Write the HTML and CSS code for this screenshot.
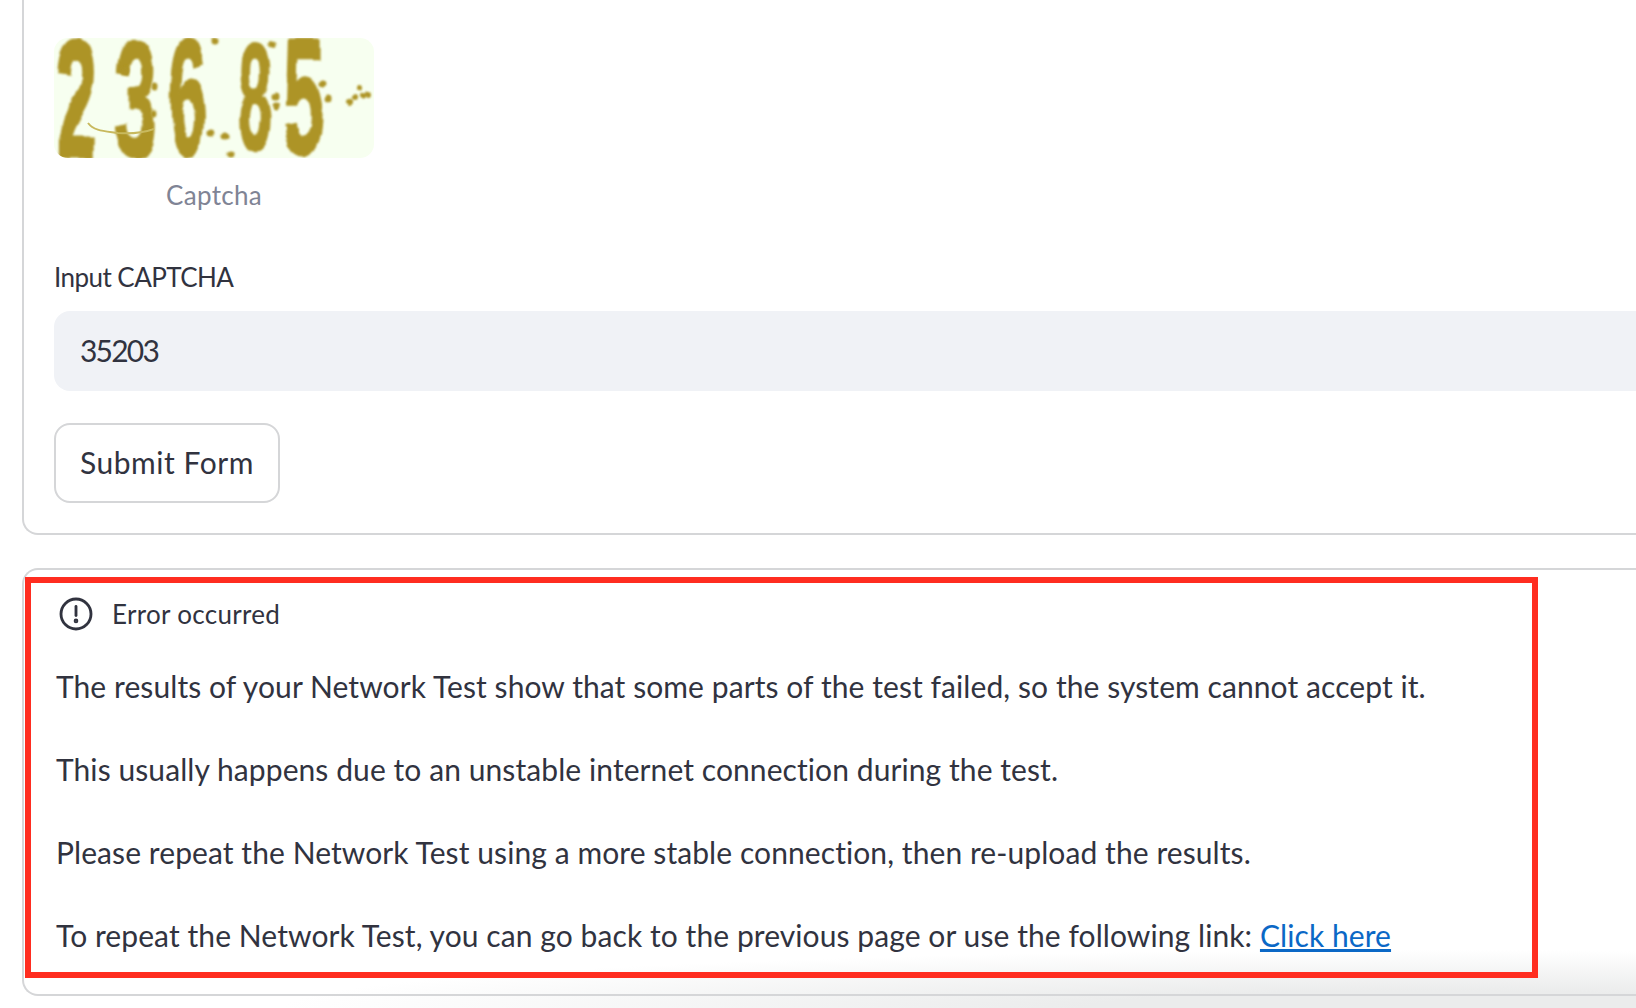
FILE: index.html
```html
<!DOCTYPE html>
<html lang="en">
<head>
  <meta charset="UTF-8">
  <title>Network Test Form</title>
  <link rel="stylesheet" href="styles.css">
</head>
<body>
  <div class="fog"></div>

  <form class="card card-form">
    <figure class="captcha">
      <svg class="captcha-img" viewBox="0 0 320 120" width="320" height="120">
        <defs>
          <filter id="rough" x="-5%" y="-5%" width="110%" height="110%">
            <feTurbulence type="fractalNoise" baseFrequency="0.03" numOctaves="2" seed="4"/>
            <feDisplacementMap in="SourceGraphic" scale="8" xChannelSelector="R" yChannelSelector="G"/>
            <feGaussianBlur stdDeviation="0.8"/>
          </filter>
        </defs>
        <rect width="320" height="120" fill="#f7fff0"/>
        <g class="captcha-digits" filter="url(#rough)">
          <text transform="translate(2 119) scale(1.15 2.62)">2</text>
          <text transform="translate(60 119) scale(1.2 2.62)">3</text>
          <text transform="translate(116 117) scale(1 2.6)">6</text>
          <text transform="translate(184 112) scale(0.95 2.35)">8</text>
          <text transform="translate(229 115) scale(1.15 2.55)">5</text>
        </g>
        <g class="captcha-dots" filter="url(#rough)">
          <circle cx="161" cy="4" r="3.5"/><circle cx="218" cy="6" r="3.5"/>
          <circle cx="71" cy="32" r="3.5"/><circle cx="101" cy="49" r="3.5"/>
          <circle cx="100" cy="74" r="3.5"/><circle cx="269" cy="46" r="3.5"/>
          <circle cx="275" cy="60" r="3.5"/><circle cx="221" cy="59" r="3.5"/>
          <circle cx="222" cy="68" r="3.5"/><circle cx="157" cy="96" r="3.5"/>
          <circle cx="170" cy="98" r="3.5"/><circle cx="176" cy="115" r="3.5"/>
          <circle cx="306" cy="50" r="3"/><circle cx="310" cy="58" r="3"/>
          <circle cx="302" cy="60" r="3"/><circle cx="296" cy="64" r="3"/>
          <circle cx="315" cy="56" r="3"/>
        </g>
        <path d="M34 85c6 8 16 8 30 10c12 1 24 0 36-4" fill="none" stroke="#c8b95e" stroke-width="2"/>
      </svg>
      <figcaption class="captcha-caption">Captcha</figcaption>
    </figure>

    <label class="field-label" for="captchaInput">Input CAPTCHA</label>
    <input class="field-input" id="captchaInput" type="text" value="35203">

    <button class="button" type="button">Submit Form</button>
  </form>

  <section class="card card-result">
    <div class="highlight">
      <div class="alert-head">
        <svg class="alert-icon" viewBox="0 0 24 24" width="36" height="36" fill="none" stroke="#31333f" stroke-width="1.9">
          <circle cx="12" cy="12" r="10"/>
          <path d="M12 7v6" stroke-linecap="round"/>
          <circle cx="12" cy="16.6" r="0.6" fill="#31333f"/>
        </svg>
        <span>Error occurred</span>
      </div>
      <p>The results of your Network Test show that some parts of the test failed, so the system cannot accept it.</p>
      <p>This usually happens due to an unstable internet connection during the test.</p>
      <p>Please repeat the Network Test using a more stable connection, then re-upload the results.</p>
      <p>To repeat the Network Test, you can go back to the previous page or use the following link: <a href="#">Click here</a></p>
    </div>
  </section>
</body>
</html>
```

FILE: styles.css
```css
html, body {
  margin: 0;
  padding: 0;
  height: 100%;
  overflow: hidden;
}

body {
  position: relative;
  background-color: #fff;
  color: #31333f;
  font-family: "Lato", "Noto Sans", sans-serif;
  font-variant-ligatures: none;
  padding-left: 22px;
}

.fog {
  position: absolute;
  left: 280px;
  right: 0;
  bottom: 0;
  height: 58px;
  background: radial-gradient(ellipse 1150px 58px at 85% 100%, #ebecec 30%, rgba(240, 241, 241, 0) 100%);
  pointer-events: none;
}

.card {
  position: relative;
  border: 2px solid #d5d6d8;
  border-right: none;
  border-radius: 16px 0 0 16px;
}

.card-form {
  border-top: none;
  border-top-left-radius: 0;
  height: 535px;
  box-sizing: border-box;
  padding: 38px 0 0 30px;
}

.card-result {
  margin-top: 33px;
  height: 428px;
  box-sizing: border-box;
  padding-top: 7px;
}

.captcha {
  margin: 0;
  width: 320px;
}

.captcha-img {
  display: block;
  border-radius: 14px;
}

.captcha-digits {
  font-family: "Liberation Sans", sans-serif;
  font-size: 64px;
  font-weight: 700;
  fill: #ad9426;
  stroke: #ad9426;
  stroke-width: 1.2px;
}

.captcha-dots {
  fill: #ad9426;
}

.captcha-caption {
  margin-top: 19px;
  text-align: center;
  font-size: 26px;
  line-height: 36px;
  letter-spacing: 0.3px;
  color: #808495;
}

.field-label {
  display: block;
  margin-top: 46px;
  font-size: 26px;
  line-height: 36px;
  letter-spacing: -0.55px;
}

.field-input {
  display: block;
  box-sizing: border-box;
  width: 100%;
  height: 80px;
  margin-top: 16px;
  padding: 0 26px 3px;
  border: none;
  border-radius: 16px 0 0 16px;
  background-color: #f0f2f6;
  color: #31333f;
  font-family: inherit;
  font-size: 30px;
  letter-spacing: -1.8px;
}

.button {
  display: block;
  box-sizing: border-box;
  width: 226px;
  height: 80px;
  margin-top: 32px;
  padding: 0 0 2px;
  background-color: #fff;
  color: #31333f;
  border: 2px solid #d5d6d8;
  border-radius: 16px;
  font-family: inherit;
  font-size: 30px;
  letter-spacing: 0.55px;
}

.highlight {
  box-sizing: border-box;
  width: 1513px;
  height: 401px;
  margin-left: 1px;
  padding: 0 0 0 25px;
  border: 6px solid #ff2d20;
  font-size: 30px;
  letter-spacing: 0.08px;
}

.alert-head {
  display: flex;
  align-items: center;
  gap: 18px;
  height: 62px;
  margin-left: 2px;
  margin-bottom: 20px;
  font-size: 26px;
  letter-spacing: 0.3px;
}

.alert-icon {
  display: block;
}

.highlight p {
  margin: 0 0 41px;
  line-height: 42px;
}

.highlight a {
  color: #0b68c6;
}
```
